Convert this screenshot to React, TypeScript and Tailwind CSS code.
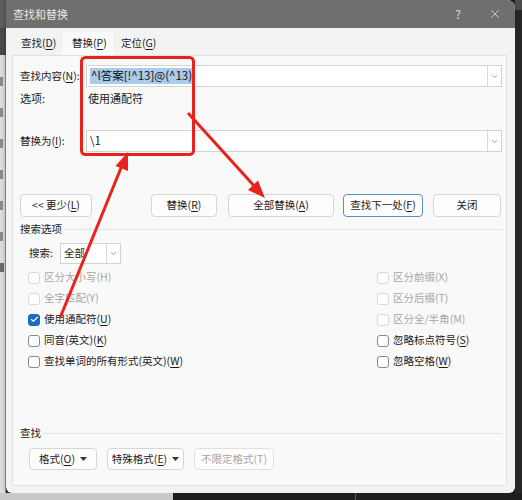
import { ChevronDown, X, Check } from "lucide-react";
import clsx from "clsx";

function Key({ k, plain }: { k: string; plain?: boolean }) {
  return (
    <>
      (<span className={plain ? "" : "underline underline-offset-2"}>{k}</span>)
    </>
  );
}

function Box({ label, k, state }: { label: string; k: string; state: "off" | "on" | "dis" }) {
  return (
    <div className="flex items-center h-[21px]">
      <span
        className={clsx(
          "w-[12px] h-[12px] rounded-[3px] border flex items-center justify-center",
          state === "on" && "bg-[#1b6ac4] border-[#1b6ac4]",
          state === "dis" && "bg-white border-[#d9d9d9]",
          state === "off" && "bg-white border-[#8a8a8a]"
        )}
      >
        {state === "on" && <Check className="w-[9px] h-[9px] text-white" strokeWidth={3} />}
      </span>
      <span className={clsx("ml-[4px] whitespace-nowrap", state === "dis" ? "text-[#a6a6a6]" : "text-[#1b1b1b]")}>
        {label}
        <Key k={k} plain={state === "dis"} />
      </span>
    </div>
  );
}

function Btn({ className, children }: { className?: string; children: React.ReactNode }) {
  return (
    <div
      className={clsx(
        "h-full flex items-center justify-center rounded-[4px] border bg-[#fdfdfd] whitespace-nowrap",
        className ?? "border-[#d6d6d6]"
      )}
    >
      {children}
    </div>
  );
}

function Caret() {
  return (
    <svg width="7" height="4" viewBox="0 0 7 4" className="ml-[5px]">
      <polygon points="0,0 7,0 3.5,4" fill="#333" />
    </svg>
  );
}

function Combo({ children }: { children?: React.ReactNode }) {
  return (
    <div className="flex-1 h-full flex bg-white border border-[#d3d3d3]">
      <div className="flex-1 flex items-center pl-[3px]">{children}</div>
      <div className="w-[14px] border-l border-[#d9d9d9] flex items-center justify-center">
        <ChevronDown className="w-[9px] h-[9px] text-[#666]" strokeWidth={1.5} />
      </div>
    </div>
  );
}

export default function App() {
  return (
    <div className="relative w-[522px] h-[500px] overflow-hidden bg-[#1e1e1e] text-[10.5px] leading-none text-[#1b1b1b] font-['Noto_Sans_CJK_SC','Microsoft_YaHei',sans-serif]">
      <div className="flex h-[493px]">
        {/* document behind, left edge */}
        <div className="w-[6px] flex flex-col bg-[#dcdcdc]">
          <div className="h-[28px] bg-[#5f5f5f]" />
          <div className="h-[27px] bg-[#4a4a4a]" />
          <div className="flex-1 flex flex-col gap-[22px] pt-[22px] border-r border-[#9a9a9a]">
            <div className="w-[3px] h-[9px] bg-[#8a8a8a]" />
            <div className="w-[3px] h-[9px] bg-[#8a8a8a]" />
            <div className="w-[3px] h-[9px] bg-[#8a8a8a]" />
            <div className="w-[3px] h-[9px] bg-[#8a8a8a]" />
            <div className="w-[3px] h-[9px] bg-[#8a8a8a]" />
            <div className="w-[3px] h-[9px] bg-[#8a8a8a]" />
            <div className="w-[4px] h-[9px] bg-[#6a6a6a]" />
          </div>
        </div>

        {/* dialog */}
        <div className="w-[509px] flex flex-col bg-[#f3f3f3] rounded-tr-[8px] rounded-b-[6px] overflow-hidden shadow-[0_0_4px_rgba(0,0,0,0.4)]">
          <div className="h-[28px] flex items-center bg-[#6f6f6f] text-[#e6e6e6] pl-[7px]">
            <span className="text-[11px]">查找和替换</span>
            <span className="ml-auto mr-[27px] text-[12px] text-[#dcdcdc]">?</span>
            <X className="w-[14px] h-[14px] mr-[13px] text-[#e6e6e6]" strokeWidth={1.3} />
          </div>

          <div className="flex-1 flex flex-col pl-[6px] pr-[8px]">
            {/* tabs */}
            <div className="h-[27px] flex items-end">
              <div className="w-[51px] h-[23px] flex items-center pl-[9px]">
                查找<Key k="D" />
              </div>
              <div className="w-[50px] h-[23px] flex items-center pl-[9px] bg-[#fafafa]">
                替换<Key k="P" />
              </div>
              <div className="h-[23px] flex items-center pl-[8px]">
                定位<Key k="G" />
              </div>
            </div>

            {/* panel */}
            <div className="h-[431px] flex flex-col bg-[#f9f9f9] border border-[#e2e2e2] pl-[7px] pr-[4px]">
              <div className="mt-[9px] h-[22px] flex items-center">
                <span className="w-[66px] shrink-0 whitespace-nowrap">
                  查找内容<Key k="N" />:
                </span>
                <Combo>
                  <span className="bg-[#a9cbec] text-[#111] px-[1px] py-[2px] text-[11.5px]">^l答案[!^13]@(^13)</span>
                </Combo>
              </div>

              <div className="mt-[3px] h-[16px] flex items-center text-[11px]">
                <span className="w-[68px]">选项:</span>
                <span>使用通配符</span>
              </div>

              <div className="mt-[24px] h-[22px] flex items-center">
                <span className="w-[66px] shrink-0 whitespace-nowrap">
                  替换为<Key k="I" />:
                </span>
                <Combo>
                  <span className="text-[11.5px]">\1</span>
                </Combo>
              </div>

              <div className="mt-[42px] h-[23px] flex">
                <div className="w-[72px]">
                  <Btn>
                    &lt;&lt; 更少<Key k="L" />
                  </Btn>
                </div>
                <div className="w-[66px] ml-[59px]">
                  <Btn>
                    替换<Key k="R" />
                  </Btn>
                </div>
                <div className="w-[106px] ml-[11px]">
                  <Btn>
                    全部替换<Key k="A" />
                  </Btn>
                </div>
                <div className="w-[80px] ml-[9px]">
                  <Btn className="border-[#5b8fc6]">
                    查找下一处<Key k="F" />
                  </Btn>
                </div>
                <div className="w-[68px] ml-[10px]">
                  <Btn>关闭</Btn>
                </div>
              </div>

              <div className="mt-[5px] h-[14px] flex items-center gap-[3px]">
                <span>搜索选项</span>
                <div className="flex-1 h-px bg-[#e3e3e3]" />
              </div>

              <div className="mt-[7px] h-[21px] flex items-center pl-[9px]">
                <span className="w-[31px]">搜索:</span>
                <div className="w-[61px] h-full flex bg-white border border-[#d3d3d3]">
                  <div className="flex-1 flex items-center pl-[3px]">全部</div>
                  <div className="w-[14px] border-l border-[#d9d9d9] flex items-center justify-center">
                    <ChevronDown className="w-[9px] h-[9px] text-[#666]" strokeWidth={1.5} />
                  </div>
                </div>
              </div>

              <div className="mt-[3px] flex pl-[8px]">
                <div className="w-[349px] flex flex-col">
                  <Box label="区分大小写" k="H" state="dis" />
                  <Box label="全字匹配" k="Y" state="dis" />
                  <Box label="使用通配符" k="U" state="on" />
                  <Box label="同音(英文)" k="K" state="off" />
                  <Box label="查找单词的所有形式(英文)" k="W" state="off" />
                </div>
                <div className="flex flex-col">
                  <Box label="区分前缀" k="X" state="dis" />
                  <Box label="区分后缀" k="T" state="dis" />
                  <Box label="区分全/半角" k="M" state="dis" />
                  <Box label="忽略标点符号" k="S" state="off" />
                  <Box label="忽略空格" k="W" state="off" />
                </div>
              </div>

              <div className="mt-[54px] h-[14px] flex items-center gap-[1px]">
                <span>查找</span>
                <div className="flex-1 h-px bg-[#e3e3e3]" />
              </div>

              <div className="mt-[8px] h-[22px] flex gap-[10px] pl-[9px]">
                <div className="w-[68px]">
                  <Btn>
                    格式<Key k="O" />
                    <Caret />
                  </Btn>
                </div>
                <div className="w-[77px]">
                  <Btn>
                    特殊格式<Key k="E" />
                    <Caret />
                  </Btn>
                </div>
                <div className="w-[80px]">
                  <Btn className="border-[#e0e0e0] text-[#a6a6a6]">
                    不限定格式<Key k="T" plain />
                  </Btn>
                </div>
              </div>
            </div>
          </div>
        </div>

        {/* right edge */}
        <div className="flex-1 flex flex-col bg-[#262626]">
          <div className="h-[10px] bg-[#4b4b4b]" />
        </div>
      </div>

      <div className="h-[7px] flex">
        <div className="w-[173px] bg-[#c9c9c9]" />
        <div className="w-[183px] bg-[#1e1e1e] border-r border-[#5a5a5a]" />
        <div className="flex-1 bg-[#1e1e1e]" />
      </div>

      {/* annotation overlay */}
      <svg className="absolute inset-0 pointer-events-none" width="522" height="500" viewBox="0 0 522 500">
        <rect x="81.5" y="57.5" width="112" height="97" rx="4" fill="none" stroke="#e8231c" strokeWidth="3" />
        <line x1="60" y1="318" x2="123" y2="163" stroke="#e8231c" strokeWidth="3" />
        <polygon points="128,152 128,171 115.5,166" fill="#e8231c" />
        <line x1="188" y1="113" x2="256" y2="188" stroke="#e8231c" strokeWidth="3" />
        <polygon points="265,198 248,190 258,180.5" fill="#e8231c" />
      </svg>
    </div>
  );
}
